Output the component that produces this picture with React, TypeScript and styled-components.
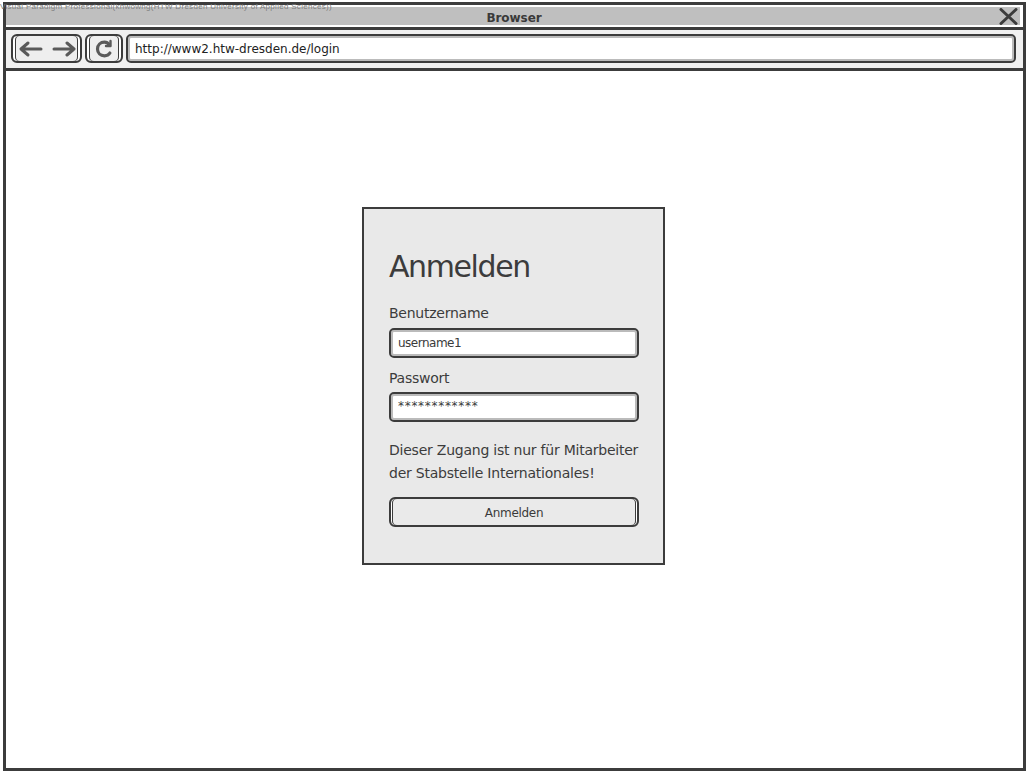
import React from "react";
import styled, { createGlobalStyle } from "styled-components";

const Global = createGlobalStyle`
  html, body { margin: 0; padding: 0; background: #fff; }
  body { width: 1030px; height: 774px; overflow: hidden; font-family: "DejaVu Sans", sans-serif; }
`;

const Frame = styled.div`
  position: relative;
  box-sizing: border-box;
  width: 1023px;
  height: 769px;
  margin: 2px 0 0 3px;
  border: 3px solid #3c3c3c;
  display: flex;
  flex-direction: column;
`;
const Watermark = styled.div`
  position: absolute;
  left: -6px;
  top: -3px;
  font: 8px/9px "Liberation Sans", sans-serif;
  color: #808080;
  white-space: nowrap;
  letter-spacing: 0.29px;
`;
const TitleBar = styled.div`
  box-sizing: border-box;
  height: 25px;
  flex: none;
  padding: 2px 1px 2px 0;
  border-bottom: 3px solid #3c3c3c;
`;
const TitleFill = styled.div`
  position: relative;
  box-sizing: border-box;
  height: 18px;
  padding: 4px 0 0 2px;
  margin-right: 2px;
  background: #bfbfbf;
  display: flex;
  align-items: center;
  justify-content: center;
  font: bold 12px/14px "DejaVu Sans", sans-serif;
  letter-spacing: -0.05px;
  color: #3a3a3a;
`;
const Close = styled.svg`
  position: absolute;
  right: 2px;
  top: 1px;
  width: 19px;
  height: 17px;
`;
const Toolbar = styled.div`
  box-sizing: border-box;
  height: 41px;
  flex: none;
  display: flex;
  align-items: center;
  gap: 3px;
  padding: 0 7px 1px 5px;
  background: #f0f0f0;
  border-bottom: 3px solid #3c3c3c;
`;
const ToolButton = styled.div<{ $w: number }>`
  box-sizing: border-box;
  width: ${(p) => p.$w}px;
  height: 29px;
  flex: none;
  border: 2px solid #3c3c3c;
  border-radius: 6px;
  box-shadow: inset 2px 0 0 #fff, inset 3px 0 0 #3c3c3c, inset -2px 0 0 #fff, inset -3px 0 0 #3c3c3c;
  background: #eeeeee;
  display: flex;
  align-items: center;
  justify-content: center;
`;
const UrlBox = styled.div`
  box-sizing: border-box;
  flex: 1;
  height: 29px;
  border: 2px solid #3c3c3c;
  border-radius: 5px;
  background: #fff;
  box-shadow: inset 0 0 0 2px #bbb;
  padding: 0 0 0 7px;
  display: flex;
  align-items: center;
  font: 12px/20px "DejaVu Sans", sans-serif;
  letter-spacing: 0px;
  color: #222;
`;
const Canvas = styled.main`
  flex: 1;
  display: flex;
  flex-direction: column;
  align-items: flex-start;
  padding: 136px 0 0 356px;
`;
const Card = styled.form`
  box-sizing: border-box;
  width: 303px;
  height: 358px;
  border: 2px solid #3c3c3c;
  background: #e9e9e9;
  padding: 40px 24px 0 25px;
  display: flex;
  flex-direction: column;
`;
const Heading = styled.h1`
  margin: 0 0 19px;
  font: 400 30px/36px "DejaVu Sans", sans-serif;
  letter-spacing: -1.4px;
  color: #3c3c3c;
`;
const Label = styled.label<{ $tight?: boolean }>`
  font: 14px/18px "DejaVu Sans", sans-serif;
  letter-spacing: -0.25px;
  color: #3c3c3c;
  margin-bottom: ${(p) => (p.$tight ? 5 : 6)}px;
`;
const Field = styled.div<{ $up?: boolean }>`
  box-sizing: border-box;
  width: 250px;
  height: 30px;
  border: 2px solid #3c3c3c;
  border-radius: 5px;
  background: #fff;
  box-shadow: inset 0 0 0 2px #bbb;
  padding: ${(p) => (p.$up ? "0 0 2px 7px" : "0 0 1px 7px")};
  margin-bottom: 11px;
  display: flex;
  align-items: center;
  font: 12px/16px "DejaVu Sans", sans-serif;
  letter-spacing: ${(p) => (p.$up ? "0.7px" : "-0.5px")};
  color: #3a3a3a;
`;
const Note = styled.p`
  margin: 6px 0 12px;
  font: 14px/23px "DejaVu Sans", sans-serif;
  letter-spacing: -0.23px;
  color: #3c3c3c;
  white-space: nowrap;
`;
const Submit = styled.button`
  box-sizing: border-box;
  width: 250px;
  height: 30px;
  border: 2px solid #3c3c3c;
  border-radius: 6px;
  background: #eaeaea;
  box-shadow: inset 1px 0 0 #fff, inset 2px 0 0 #3c3c3c, inset -1px 0 0 #fff, inset -2px 0 0 #3c3c3c;
  font: 12px/16px "DejaVu Sans", sans-serif;
  letter-spacing: -0.3px;
  color: #3a3a3a;
  padding: 2px 0 0;
`;

export default function App() {
  return (
    <>
      <Global />
      <Frame>
        <TitleBar>
          <TitleFill>
            Browser
            <Close viewBox="0 0 19 17" fill="none" stroke="#3c3c3c" strokeWidth="3" strokeLinecap="round">
              <path d="M2 1.5 17 15.5M17 1.5 2 15.5" />
            </Close>
          </TitleFill>
        </TitleBar>
        <Toolbar>
          <ToolButton $w={71}>
            <svg width="58" height="20" viewBox="0 0 58 20" fill="none" stroke="#5a5a5a" strokeWidth="3" strokeLinecap="round" strokeLinejoin="round">
              <path d="M3 10H23M10 4 3 10 10 16" />
              <path d="M36 10H56M49 4 56 10 49 16" />
            </svg>
          </ToolButton>
          <ToolButton $w={38}>
            <svg width="20" height="20" viewBox="0 0 20 20" fill="none" stroke="#5a5a5a" strokeWidth="3.2" strokeLinecap="round" strokeLinejoin="round">
              <path d="M15.5 6C14 4 12.5 3.2 10.5 3.2 6.5 3.2 3.5 6 3.5 10s3 6.8 7 6.8c2.4 0 4.3-1 5.4-2.8" />
              <path d="M16.5 2v5h-4.5" strokeWidth="2.4" />
            </svg>
          </ToolButton>
          <UrlBox>http://www2.htw-dresden.de/login</UrlBox>
        </Toolbar>
        <Canvas>
          <Card>
            <Heading>Anmelden</Heading>
            <Label>Benutzername</Label>
            <Field>username1</Field>
            <Label $tight>Passwort</Label>
            <Field $up>************</Field>
            <Note>
              Dieser Zugang ist nur für Mitarbeiter
              <br />
              der Stabstelle Internationales!
            </Note>
            <Submit type="button">Anmelden</Submit>
          </Card>
        </Canvas>
        <Watermark>Visual Paradigm Professional(khwowng(HTW Dresden University of Applied Sciences))</Watermark>
      </Frame>
    </>
  );
}
